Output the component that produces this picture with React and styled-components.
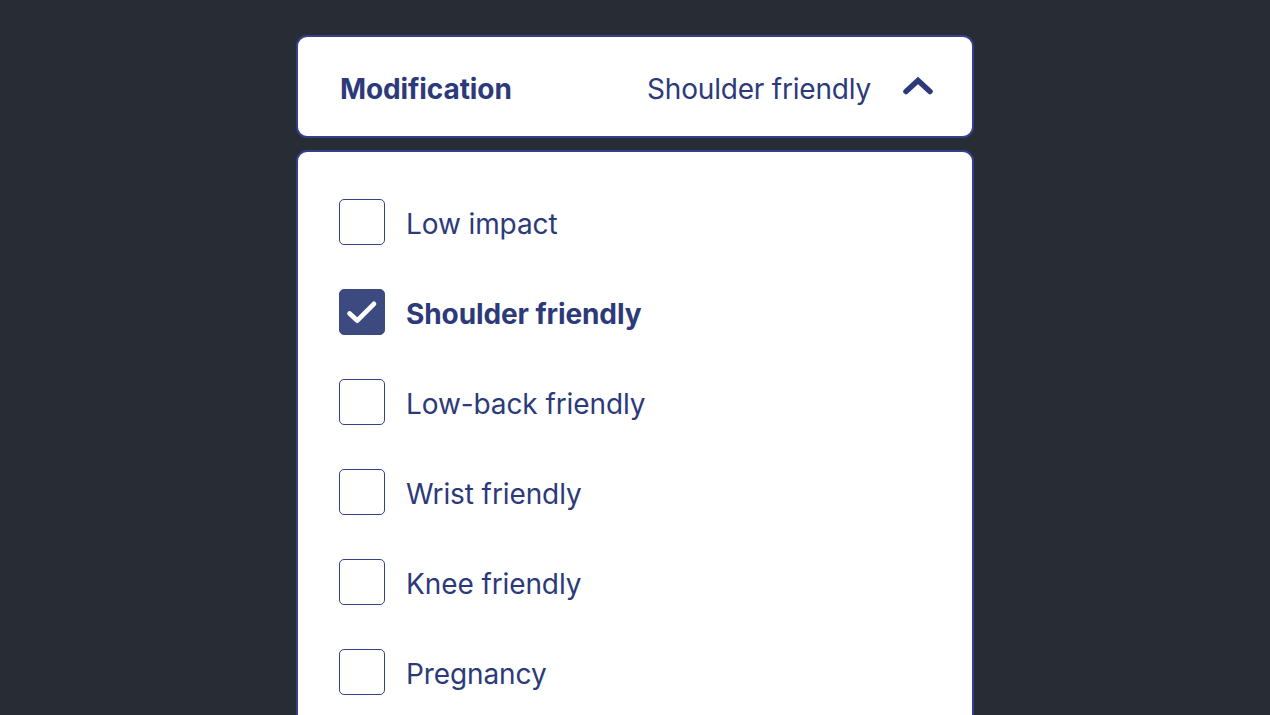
import React, { useState } from 'react';
import styled, { createGlobalStyle } from 'styled-components';

const GlobalStyle = createGlobalStyle`
  html, body {
    margin: 0;
    padding: 0;
    background: #282c35;
    font-family: Inter, "Noto Sans", sans-serif;
    overflow: hidden;
  }
`;

const OPTIONS = [
  'Low impact',
  'Shoulder friendly',
  'Low-back friendly',
  'Wrist friendly',
  'Knee friendly',
  'Pregnancy',
];

const ChevronUp = () => (
  <svg width="32" height="20" viewBox="0 0 32 20" fill="none">
    <path
      d="M4 15.5 L16 4.5 L28 15.5"
      stroke="#2c3a7a"
      strokeWidth="5.5"
      strokeLinecap="round"
      strokeLinejoin="miter"
    />
  </svg>
);

const Check = () => (
  <svg width="46" height="46" viewBox="0 0 46 46" fill="none">
    <path
      d="M10 24.5 L18 32 L35.5 14.5"
      stroke="#fff"
      strokeWidth="5"
      strokeLinecap="round"
      strokeLinejoin="round"
    />
  </svg>
);

const App = () => {
  const [selected, setSelected] = useState('Shoulder friendly');

  return (
    <>
      <GlobalStyle />
      <Page>
        <Wrapper>
          <Header>
            <Label>Modification</Label>
            <Value>
              {selected}
              <ChevronUp />
            </Value>
          </Header>
          <Panel>
            {OPTIONS.map(option => (
              <Option key={option} onClick={() => setSelected(option)}>
                <Box checked={option === selected}>
                  {option === selected && <Check />}
                </Box>
                <OptionText checked={option === selected}>{option}</OptionText>
              </Option>
            ))}
          </Panel>
        </Wrapper>
      </Page>
    </>
  );
};

export default App;

const Page = styled.div`
  height: 715px;
  padding-top: 35px;
  box-sizing: border-box;
  display: flex;
  justify-content: center;
`;

const Wrapper = styled.div`
  width: 678px;
  display: flex;
  flex-direction: column;
  gap: 12px;
`;

const Header = styled.div`
  height: 103px;
  box-sizing: border-box;
  background: #fff;
  border: 2px solid #34418a;
  border-radius: 11px;
  display: flex;
  align-items: center;
  justify-content: space-between;
  padding: 4px 38px 0 42px;
  color: #2c3a7a;
`;

const Label = styled.div`
  font-weight: 700;
  font-size: 28px;
  letter-spacing: -0.1px;
`;

const Value = styled.div`
  display: flex;
  align-items: center;
  gap: 31px;
  font-size: 28px;
  letter-spacing: -0.2px;

  svg {
    margin-top: -6px;
  }
`;

const Panel = styled.div`
  flex: 1;
  background: #fff;
  border: 2px solid #34418a;
  border-bottom: none;
  border-radius: 11px 11px 0 0;
  padding: 47px 41px 0;
  display: flex;
  flex-direction: column;
  gap: 44px;
`;

const Option = styled.div`
  display: flex;
  align-items: center;
  gap: 21px;
  cursor: pointer;
`;

const Box = styled.div`
  width: 46px;
  height: 46px;
  box-sizing: border-box;
  border-radius: 5px;
  border: 1.5px solid ${p => (p.checked ? '#3d4a7f' : '#34418a')};
  background: ${p => (p.checked ? '#3d4a7f' : '#fff')};
  display: flex;
  align-items: center;
  justify-content: center;
  flex-shrink: 0;
  overflow: hidden;
`;

const OptionText = styled.span`
  font-size: 28px;
  font-weight: ${p => (p.checked ? 700 : 400)};
  color: #2c3a7a;
  letter-spacing: -0.1px;
  padding-top: 3px;
`;
